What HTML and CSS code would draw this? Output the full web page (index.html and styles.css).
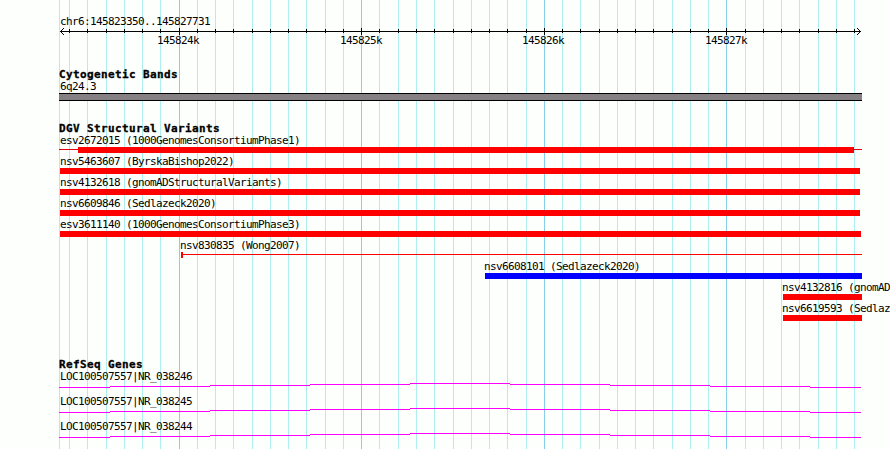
FILE: index.html
```
<!DOCTYPE html>
<html lang="en">
<head>
<meta charset="utf-8">
<title>chr6:145823350..145827731</title>
<link rel="stylesheet" href="styles.css">
</head>
<body>
<main class="browser">
  <svg class="grid" width="890" height="449" shape-rendering="crispEdges" aria-hidden="true"><g id="grid-lines"></g></svg>

  <header class="ruler">
    <div class="label">chr6:145823350..145827731</div>
    <svg class="axis" width="890" height="8" shape-rendering="crispEdges" aria-hidden="true">
      <path fill="#000" d="M60 3h801v1H60zM61 2h1v1h-1zM61 4h1v1h-1zM62 1h1v1h-1zM62 5h1v1h-1zM63 0h1v1h-1zM63 6h1v1h-1zM859 2h1v1h-1zM859 4h1v1h-1zM858 1h1v1h-1zM858 5h1v1h-1zM857 0h1v1h-1zM857 6h1v1h-1z"/>
      <g id="ticks"></g>
    </svg>
    <div class="scale"><span>145824k</span><span>145825k</span><span>145826k</span><span>145827k</span></div>
  </header>

  <section class="cyto">
    <h2>Cytogenetic Bands</h2>
    <div class="label">6q24.3</div>
    <div class="band"></div>
  </section>

  <section class="variants">
    <h2>DGV Structural Variants</h2>
    <div class="row"><div class="label">esv2672015 (1000GenomesConsortiumPhase1)</div><div class="bar ranged"></div></div>
    <div class="row"><div class="label">nsv5463607 (ByrskaBishop2022)</div><div class="bar"></div></div>
    <div class="row"><div class="label">nsv4132618 (gnomADStructuralVariants)</div><div class="bar"></div></div>
    <div class="row"><div class="label">nsv6609846 (Sedlazeck2020)</div><div class="bar"></div></div>
    <div class="row"><div class="label">esv3611140 (1000GenomesConsortiumPhase3)</div><div class="bar full"></div></div>
    <div class="row wong"><div class="label">nsv830835 (Wong2007)</div><div class="bar thin"></div></div>
    <div class="row gain"><div class="label">nsv6608101 (Sedlazeck2020)</div><div class="bar"></div></div>
    <div class="row edge"><div class="label">nsv4132816 (gnomAD</div><div class="bar"></div></div>
    <div class="row edge"><div class="label">nsv6619593 (Sedlaz</div><div class="bar"></div></div>
  </section>

  <section class="genes">
    <h2>RefSeq Genes</h2>
    <div class="gene"><div class="label">LOC100507557|NR_038246</div><svg width="890" height="5" shape-rendering="crispEdges"><path class="intron" d="M59 4h51v1H59zM110 3h100v1H110zM210 2h100v1H210zM310 1h100v1H310zM410 0h100v1H410zM510 1h100v1H510zM610 2h100v1H610zM710 3h100v1H710zM810 4h51v1H810z"/></svg></div>
    <div class="gene"><div class="label">LOC100507557|NR_038245</div><svg width="890" height="5" shape-rendering="crispEdges"><path class="intron" d="M59 4h51v1H59zM110 3h100v1H110zM210 2h100v1H210zM310 1h100v1H310zM410 0h100v1H410zM510 1h100v1H510zM610 2h100v1H610zM710 3h100v1H710zM810 4h51v1H810z"/></svg></div>
    <div class="gene"><div class="label">LOC100507557|NR_038244</div><svg width="890" height="5" shape-rendering="crispEdges"><path class="intron" d="M59 4h51v1H59zM110 3h100v1H110zM210 2h100v1H210zM310 1h100v1H310zM410 0h100v1H410zM510 1h100v1H510zM610 2h100v1H610zM710 3h100v1H710zM810 4h51v1H810z"/></svg></div>
  </section>
</main>
<script src="grid.js"></script>
</body>
</html>
```
FILE: styles.css
```
body {
  margin: 0;
}

.browser {
  position: relative;
  z-index: 0;
  width: 890px;
  height: 449px;
  overflow: hidden;
  background: #fdfffc;
  color: #000;
  font-family: "DejaVu Sans Mono", monospace;
  font-size: 11px;
}

.grid {
  position: absolute;
  inset: 0;
  z-index: -1;
}

.minor { fill: #afeeee; }
.major { fill: #87ceeb; }

svg { display: block; }

.label {
  height: 14px;
  padding-left: 60px;
  line-height: 16px;
  letter-spacing: -0.622px;
  white-space: pre;
}

h2 {
  height: 13px;
  margin: 0;
  padding-left: 59px;
  font-size: 11px;
  line-height: 15px;
  font-weight: bold;
  letter-spacing: 0.378px;
  white-space: pre;
  -webkit-text-stroke: 0.3px #000;
}

.ruler {
  height: 53px;
  padding-top: 14px;
}

.scale {
  display: grid;
  grid-template-columns: 183px 182px 183px 60px;
  padding-left: 157px;
  margin-top: -2px;
  line-height: 14px;
  letter-spacing: -0.622px;
}

.cyto { height: 54px; }

.cyto .label { margin-top: -1px; }

.band {
  box-sizing: border-box;
  width: 803px;
  height: 8px;
  margin-left: 59px;
  border: solid #000;
  border-width: 1px 0;
  background: #848084;
}

.variants { height: 236px; }

.variants h2 { height: 12px; }

.row { height: 21px; }

.bar {
  width: 800px;
  height: 6px;
  margin-left: 60px;
  background: #f00;
}

.bar.full { width: 801px; }

.bar.ranged {
  width: 776px;
  margin-left: 59px;
  padding: 0 8px 0 19px;
  background: linear-gradient(#f00, #f00) 19px 0 / 776px 6px no-repeat,
    linear-gradient(#e00010, #e00010) 0 2px / 803px 1px no-repeat;
}

.wong .label { padding-left: 180px; }

.bar.thin {
  width: 681px;
  margin-left: 181px;
  background: linear-gradient(#f00, #f00) 0 0 / 2px 6px no-repeat,
    linear-gradient(#f00, #f00) 0 2px / 681px 1px no-repeat;
}

.gain .label { padding-left: 484px; }

.gain .bar {
  width: 377px;
  margin-left: 485px;
  background: #00f;
}

.edge .label { padding-left: 782px; }

.edge .bar {
  width: 79px;
  margin-left: 783px;
}

.genes h2 { height: 12px; }

.gene { height: 25px; }

.intron { fill: #f0f; }
```
FILE: grid.js
```
const ns = "http://www.w3.org/2000/svg";
const lines = [59, 69, 87, 106, 124, 142, 160, 179, 197, 215, 233, 252, 270, 288, 306, 325, 343, 361, 379, 398, 416, 434, 453, 471, 489, 507, 526, 544, 562, 580, 599, 617, 635, 653, 672, 690, 708, 726, 745, 763, 781, 799, 818, 836, 854];
const majors = new Set([179, 361, 544, 726]);

function rect(parent, x, y, height, cls) {
  const el = document.createElementNS(ns, "rect");
  el.setAttribute("x", x);
  el.setAttribute("y", y);
  el.setAttribute("width", 1);
  el.setAttribute("height", height);
  if (cls) el.setAttribute("class", cls);
  parent.appendChild(el);
}

const grid = document.getElementById("grid-lines");
const ticks = document.getElementById("ticks");
for (const x of lines) {
  const major = majors.has(x);
  rect(grid, x, 0, 449, major ? "major" : "minor");
  if (x > 59) rect(ticks, x, major ? 0 : 1, major ? 7 : 4);
}
```
